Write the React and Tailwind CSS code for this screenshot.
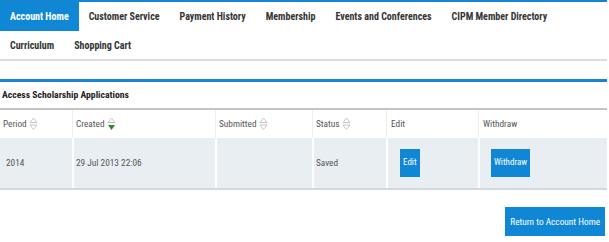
import React from "react";

const BLUE = "bg-[#0f87d5]";

function SortIcon({ active }) {
  return (
    <svg width="9" height="14" viewBox="0 0 9 14" className="ml-[2px] inline-block">
      <path d="M4.5 1 L8 5.5 L1 5.5 Z" fill="none" stroke="#b8b8b8" strokeWidth="0.8" />
      {active ? (
        <path d="M1 8 L8 8 L4.5 13 Z" fill="#2f8a2c" />
      ) : (
        <path d="M1 8 L8 8 L4.5 12.5 Z" fill="none" stroke="#b8b8b8" strokeWidth="0.8" />
      )}
    </svg>
  );
}

const row1 = ["Customer Service", "Payment History", "Membership", "Events and Conferences", "CIPM Member Directory"];

export default function App() {
  return (
    <div className="h-[242px] w-[609px] bg-white font-['Roboto',sans-serif] font-stretch-condensed text-[#333]">
      <div className="w-[607px] border-t-2 border-[#1686d2]">
        <div className="flex h-[29px] items-center text-[10px] font-bold">
          <div className={`flex h-full items-center px-[10px] text-white ${BLUE}`}>Account Home</div>
          {row1.map((t) => (
            <div key={t} className="flex h-full items-center px-[10px]">{t}</div>
          ))}
        </div>
        <div className="flex h-[28px] items-center text-[10px] font-bold">
          <div className="px-[10px]">Curriculum</div>
          <div className="px-[10px]">Shopping Cart</div>
        </div>
        <div className="h-[2px] bg-[#dddddd]" />
      </div>

      <div className="mt-[18px] w-[607px] border-t-[3px] border-[#1686d2]">
        <div className="flex h-[26px] items-center pl-[2px] text-[9.7px] font-bold text-[#222]">Access Scholarship Applications</div>
        <div className="border-t-2 border-[#c4c4c4]">
          <div className="flex h-[28px] items-center text-[9.3px] text-[#555]">
            <div className="flex h-full w-[72px] items-center pl-[3px]">Period<SortIcon /></div>
            <div className="flex h-full w-[143px] items-center border-l border-[#eeeeee] pl-[3px]">Created<SortIcon active /></div>
            <div className="flex h-full w-[97px] items-center border-l border-[#eeeeee] pl-[3px]">Submitted<SortIcon /></div>
            <div className="flex h-full w-[74px] items-center border-l border-[#eeeeee] pl-[3px]">Status<SortIcon /></div>
            <div className="flex h-full w-[92px] items-center border-l border-[#eeeeee] pl-[4px]">Edit</div>
            <div className="flex h-full flex-1 items-center border-l border-[#eeeeee] pl-[4px]">Withdraw</div>
          </div>
          <div className="flex h-[52px] items-center border-b-2 border-[#d3d8de] bg-[#e9eef3] text-[9.3px] text-[#555]">
            <div className="flex h-full w-[72px] items-center pl-[6px]">2014</div>
            <div className="flex h-full w-[143px] items-center border-l-2 border-white pl-[2px]">29 Jul 2013 22:06</div>
            <div className="h-full w-[97px] border-l-2 border-white" />
            <div className="flex h-full w-[74px] items-center border-l-2 border-white pl-[2px]">Saved</div>
            <div className="flex h-full w-[92px] items-center border-l-2 border-white pl-[12px]">
              <button className={`h-[28px] px-[3px] text-[9px] text-white ${BLUE}`}>Edit</button>
            </div>
            <div className="flex h-full flex-1 items-center border-l-2 border-white pl-[11px]">
              <button className={`h-[28px] px-[3px] text-[9px] text-white ${BLUE}`}>Withdraw</button>
            </div>
          </div>
        </div>
        <div className="flex justify-end pt-[17px] pr-[2px]">
          <button className={`h-[29px] px-[5px] text-[9.3px] text-white ${BLUE}`}>Return to Account Home</button>
        </div>
      </div>
    </div>
  );
}
